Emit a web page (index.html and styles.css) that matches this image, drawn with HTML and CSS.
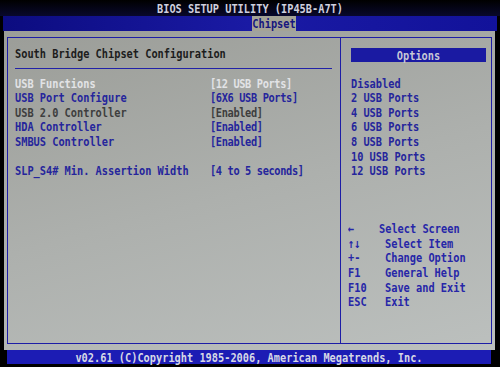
FILE: index.html
```html
<!DOCTYPE html>
<html lang="en">

<head>
    <meta charset="UTF-8">
    <title>BIOS Setup Utility</title>
    <link rel="stylesheet" href="styles.css">
</head>

<body>
    <div class="screen">
        <div class="title"><span class="tall">BIOS SETUP UTILITY (IP45B-A7T)</span></div>
        <div class="tabs">
            <div class="tab"><span class="tall">Chipset</span></div>
        </div>
        <div class="panel">
            <div class="box">
                <div class="left">
                    <div class="row head">South Bridge Chipset Configuration</div>
                    <div class="sep"></div>
                    <div class="row item selected"><span>USB Functions</span><span class="val">[12 USB Ports]</span></div>
                    <div class="row item"><span>USB Port Configure</span><span class="val">[6X6 USB Ports]</span></div>
                    <div class="row item fixed"><span>USB 2.0 Controller</span><span class="val">[Enabled]</span></div>
                    <div class="row item"><span>HDA Controller</span><span class="val">[Enabled]</span></div>
                    <div class="row item"><span>SMBUS Controller</span><span class="val">[Enabled]</span></div>
                    <div class="row item"></div>
                    <div class="row item"><span>SLP_S4# Min. Assertion Width</span><span class="val">[4 to 5 seconds]</span></div>
                </div>
                <div class="right">
                    <div class="options-head"><span class="tall">Options</span></div>
                    <div class="options">
                        <div class="row">Disabled</div>
                        <div class="row">2 USB Ports</div>
                        <div class="row">4 USB Ports</div>
                        <div class="row">6 USB Ports</div>
                        <div class="row">8 USB Ports</div>
                        <div class="row">10 USB Ports</div>
                        <div class="row">12 USB Ports</div>
                    </div>
                    <div class="help">
                        <div class="row"><span class="k short">&larr;</span><span>Select Screen</span></div>
                        <div class="row"><span class="k">&uarr;&darr;</span><span>Select Item</span></div>
                        <div class="row"><span class="k">+-</span><span>Change Option</span></div>
                        <div class="row"><span class="k">F1</span><span>General Help</span></div>
                        <div class="row"><span class="k">F10</span><span>Save and Exit</span></div>
                        <div class="row"><span class="k">ESC</span><span>Exit</span></div>
                    </div>
                </div>
            </div>
        </div>
        <div class="footer"><span class="tall">v02.61 (C)Copyright 1985-2006, American Megatrends, Inc.</span></div>
    </div>
</body>

</html>
```

FILE: styles.css
```css
* {
    margin: 0;
    padding: 0;
    box-sizing: border-box;
}

body {
    background: #000;
    width: 500px;
    height: 367px;
    overflow: hidden;
    font-family: "DejaVu Sans Mono", "Liberation Mono", monospace;
    font-weight: bold;
    font-size: 10.3px;
}

.screen {
    display: flex;
    flex-direction: column;
    height: 367px;
}

.tall {
    display: inline-block;
    transform: scaleY(1.25);
}

.title {
    height: 16px;
    line-height: 17px;
    text-align: center;
    color: #cfd0de;
    background: linear-gradient(#000 0%, #08082c 100%);
}

.tabs {
    height: 15px;
    margin: 0 3px;
    padding-left: 249px;
    display: flex;
    background: linear-gradient(90deg, #0c0c80, #1a1aa4 50%, #12129a);
}

.tab {
    width: 44px;
    line-height: 15px;
    text-align: center;
    color: #16167e;
    background: #a4a396;
}

.panel {
    height: 319px;
    margin: 0 5px 0 4px;
    padding: 6px 3px;
    background: linear-gradient(165deg, #9b9d98 0%, #adb0ad 50%, #bcc0be 100%);
}

.box {
    height: 100%;
    display: flex;
    border: 1px solid #1d1da6;
}

.row {
    height: 14.6px;
    line-height: 14.6px;
    transform: scaleY(1.25);
    white-space: pre;
}

.left {
    width: 332px;
    padding: 8px 8px 0 7px;
}

.head {
    color: #1c1c1c;
}

.sep {
    height: 1px;
    margin: 7px 0 7px 0;
    background: #2222a8;
}

.item {
    display: grid;
    grid-template-columns: 195px 1fr;
    color: #25259c;
}

.item .val {
    letter-spacing: -0.35px;
}

.item.selected {
    color: #e2e3e6;
}

.item.fixed {
    color: #3e3e3e;
}

.right {
    flex: 1;
    padding: 10px 5px 0 10px;
    border-left: 1px solid #1d1da6;
}

.options-head {
    height: 14px;
    line-height: 14px;
    text-align: center;
    color: #c6c7d6;
    background: #1a1aa2;
}

.options {
    margin-top: 13.7px;
    color: #25259c;
}

.help {
    margin: 43.4px 0 0 -3px;
    color: #2626a8;
}

.help .row {
    display: flex;
}

.help .k {
    width: 37px;
}

.help .k.short {
    width: 31px;
}

.footer {
    height: 14px;
    margin: 0 9px 0 7px;
    line-height: 15px;
    text-align: center;
    color: #d6d8e6;
    background: #1c1cb4;
}
```
